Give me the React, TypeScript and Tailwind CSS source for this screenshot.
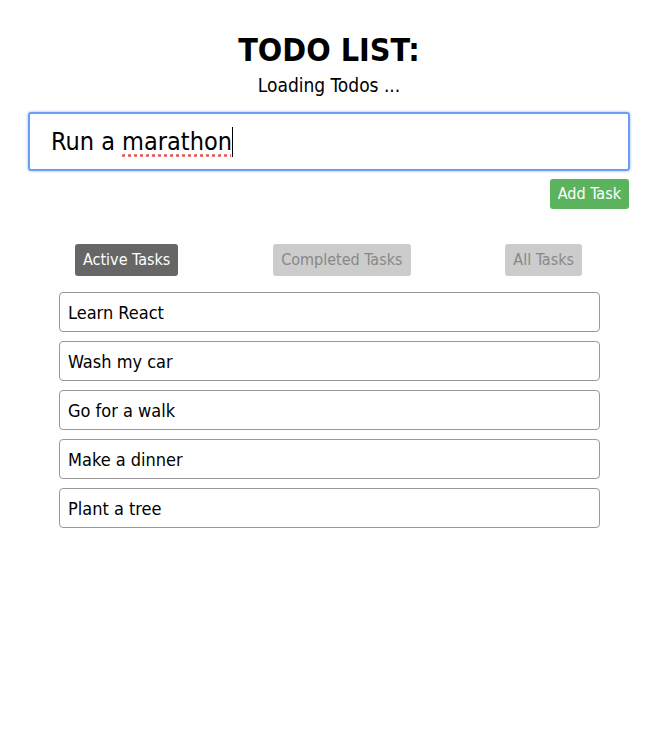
const font = { fontFamily: '"DejaVu Sans Condensed", "DejaVu Sans", sans-serif' };

const todos = ['Learn React', 'Wash my car', 'Go for a walk', 'Make a dinner', 'Plant a tree'];

export default function App() {
  return (
    <div className="min-h-[737px] bg-white text-black" style={font}>
      <div className="ml-[28px] w-[602px] pt-[31px]">
        <h1 className="text-center text-[32px] font-bold leading-[38px]">TODO LIST:</h1>
        <p className="mt-[5px] text-center text-[19px] leading-[22px]">Loading Todos ...</p>

        <div className="mt-[16px] flex h-[59px] items-center rounded-[3px] border-2 border-[#6b9ef3] px-[21px] shadow-[0_0_3px_#8fb6f5]">
          <span className="text-[25px] leading-[32px]">
            Run a{' '}
            <span className="underline decoration-[#e05555] decoration-dotted underline-offset-[5px]">marathon</span>
          </span>
          <span className="h-[30px] w-px bg-black" />
        </div>

        <div className="mt-[8px] flex justify-end pr-px">
          <button className="h-[30px] rounded-[3px] bg-[#5cb35e] px-[8px] text-[16px] font-medium text-white">Add Task</button>
        </div>

        <div className="ml-[31px] mr-[30px] mt-[35px]">
          <div className="flex justify-between px-[16px] pr-[18px]">
            <button className="h-[32px] rounded-[3px] bg-[#666666] px-[8px] text-[16px] text-white">Active Tasks</button>
            <button className="h-[32px] rounded-[3px] bg-[#cccccc] px-[8px] text-[16px] text-[#888888]">Completed Tasks</button>
            <button className="h-[32px] rounded-[3px] bg-[#cccccc] px-[8px] text-[16px] text-[#888888]">All Tasks</button>
          </div>

          <ul className="mt-[16px] flex flex-col gap-[9px]">
            {todos.map((t) => (
              <li
                key={t}
                className="flex h-[40px] items-center rounded-[4px] border border-[#999999] px-[8px] text-[18px]"
              >
                {t}
              </li>
            ))}
          </ul>
        </div>
      </div>
    </div>
  );
}
